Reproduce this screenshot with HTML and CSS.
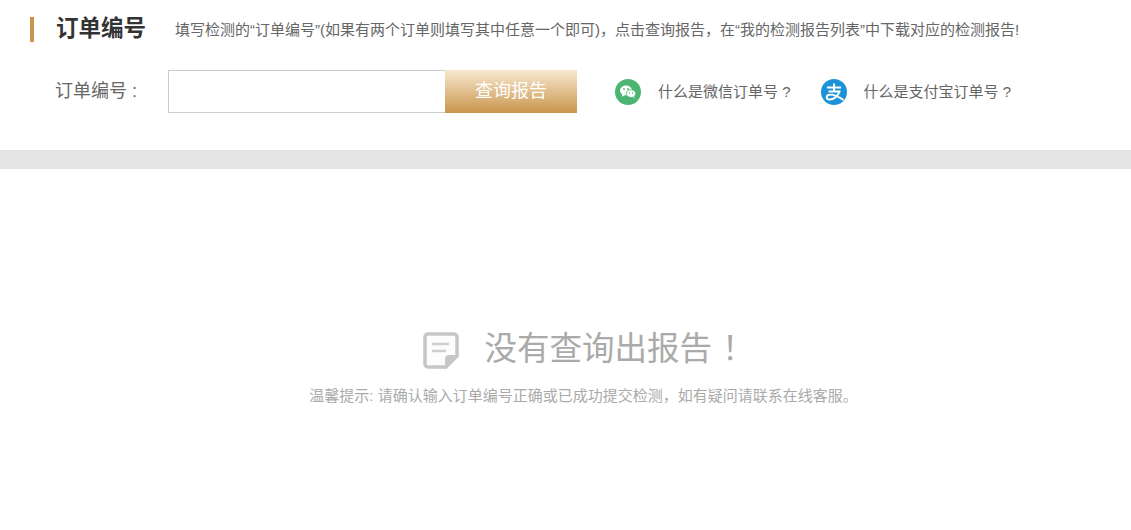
FILE: index.html
```html
<!DOCTYPE html>
<html lang="zh-CN">
<head>
  <meta charset="UTF-8" />
  <title>订单编号</title>
  <link rel="stylesheet" href="styles.css">
</head>
<body>
  <div class="query-panel">
    <div class="title-row">
      <h2>订单编号</h2>
      <p>填写检测的“订单编号”(如果有两个订单则填写其中任意一个即可)，点击查询报告，在“我的检测报告列表”中下载对应的检测报告!</p>
    </div>
    <div class="form-row">
      <label for="orderNo">订单编号 :</label>
      <input type="text" id="orderNo" />
      <button type="button">查询报告</button>
      <a class="help-link wechat-link" href="#">
        <svg class="help-icon" viewBox="0 0 26 26">
          <circle cx="13" cy="13" r="13" fill="#4cb572"/>
          <ellipse cx="11" cy="11.5" rx="6" ry="4.9" fill="#fff"/>
          <path d="M7.500 15l-.8 2.800 3-1.600z" fill="#fff"/>
          <ellipse cx="16" cy="14.600" rx="4.800" ry="3.900" fill="#fff" stroke="#4cb572" stroke-width=".8"/>
          <path d="M18 18l1.400 1.500-.3-2.400z" fill="#fff"/>
          <circle cx="9" cy="10" r=".9" fill="#4cb572"/>
          <circle cx="13" cy="10" r=".9" fill="#4cb572"/>
          <circle cx="14.600" cy="14" r=".7" fill="#4cb572"/>
          <circle cx="17.600" cy="14" r=".7" fill="#4cb572"/>
        </svg>
        <span>什么是微信订单号 ?</span>
      </a>
      <a class="help-link" href="#">
        <svg class="help-icon" viewBox="0 0 26 26">
          <circle cx="13" cy="13" r="13" fill="#1c93d9"/>
          <path d="M6 8.500h14M13 4.500v8M7.500 12.500h11c-1.500 4.500-6 8.500-10.500 8-2.800-.3-3.200-3.500-.5-4.500 3.500-1.300 9 1 15 5" fill="none" stroke="#fff" stroke-width="2"/>
        </svg>
        <span>什么是支付宝订单号 ?</span>
      </a>
    </div>
  </div>
  <div class="divider"></div>
  <div class="empty-result">
    <div class="empty-title">
      <svg class="empty-icon" viewBox="0 0 38 38">
        <path d="M6 3h26a3 3 0 0 1 3 3v19L24 36H6a3 3 0 0 1-3-3V6a3 3 0 0 1 3-3z" fill="#fdfdfd" stroke="#c6c6c6" stroke-width="3.500"/>
        <path d="M24 36v-8a3 3 0 0 1 3-3h8z" fill="#c6c6c6" stroke="#c6c6c6" stroke-width="2"/>
        <path d="M10 13h17M10 20h14" fill="none" stroke="#cfcfcf" stroke-width="2.500"/>
      </svg>
      <span>没有查询出报告<em>！</em></span>
    </div>
    <p class="empty-tip">温馨提示: 请确认输入订单编号正确或已成功提交检测，如有疑问请联系在线客服。</p>
  </div>
</body>
</html>
```

FILE: styles.css
```css
* {
  margin: 0;
  padding: 0;
  box-sizing: border-box;
}
body {
  background: #fff;
  color: #666;
  font-family: "Liberation Sans", "Noto Sans CJK SC", sans-serif;
}
.query-panel {
  height: 150px;
  padding: 17px 0 0 30px;
}
.title-row {
  display: flex;
  align-items: center;
  height: 25px;
  border-left: 4px solid #c9954c;
  padding-left: 22px;
}
.title-row h2 {
  font-size: 22.5px;
  font-weight: 700;
  line-height: 25px;
  color: #333;
  width: 119px;
  flex-shrink: 0;
  padding-bottom: 2px;
  height: 27px;
}
.title-row p {
  font-size: 15px;
  white-space: nowrap;
  padding-bottom: 2px;
}
.form-row {
  display: flex;
  align-items: center;
  margin-top: 28px;
  padding-left: 25px;
  height: 43px;
}
.form-row label {
  font-size: 18px;
  width: 113px;
  flex-shrink: 0;
  padding-bottom: 5px;
}
.form-row input {
  width: 277px;
  height: 43px;
  border: 1px solid #ccc;
  border-right: none;
}
.form-row button {
  width: 132px;
  height: 43px;
  border: none;
  background: linear-gradient(#f8e8cf, #c9954c);
  color: #fff;
  font-family: inherit;
  font-size: 18px;
  padding-bottom: 5px;
}
.help-link {
  display: flex;
  align-items: center;
  color: #666;
  font-size: 15px;
  text-decoration: none;
  margin-left: 38px;
  white-space: nowrap;
}
.help-link span {
  padding-bottom: 2px;
}
.wechat-link + .help-link {
  margin-left: 30px;
}
.help-icon {
  width: 26px;
  height: 26px;
  margin-right: 17px;
}
.divider {
  height: 19px;
  background: #e4e4e4;
}
.empty-result {
  padding: 155px 0 0 36px;
  text-align: center;
}
.empty-title {
  display: flex;
  justify-content: center;
  align-items: center;
  height: 48px;
  padding-left: 10px;
}
.empty-icon {
  width: 38px;
  height: 38px;
  margin-right: 24px;
  margin-top: 4px;
}
.empty-title span {
  font-size: 32.5px;
  color: #aaa;
  padding-bottom: 6px;
}
.empty-title em {
  font-style: normal;
  padding-left: 10px;
}
.empty-tip {
  margin-top: 12px;
  font-size: 15px;
  color: #aaa;
}
```
